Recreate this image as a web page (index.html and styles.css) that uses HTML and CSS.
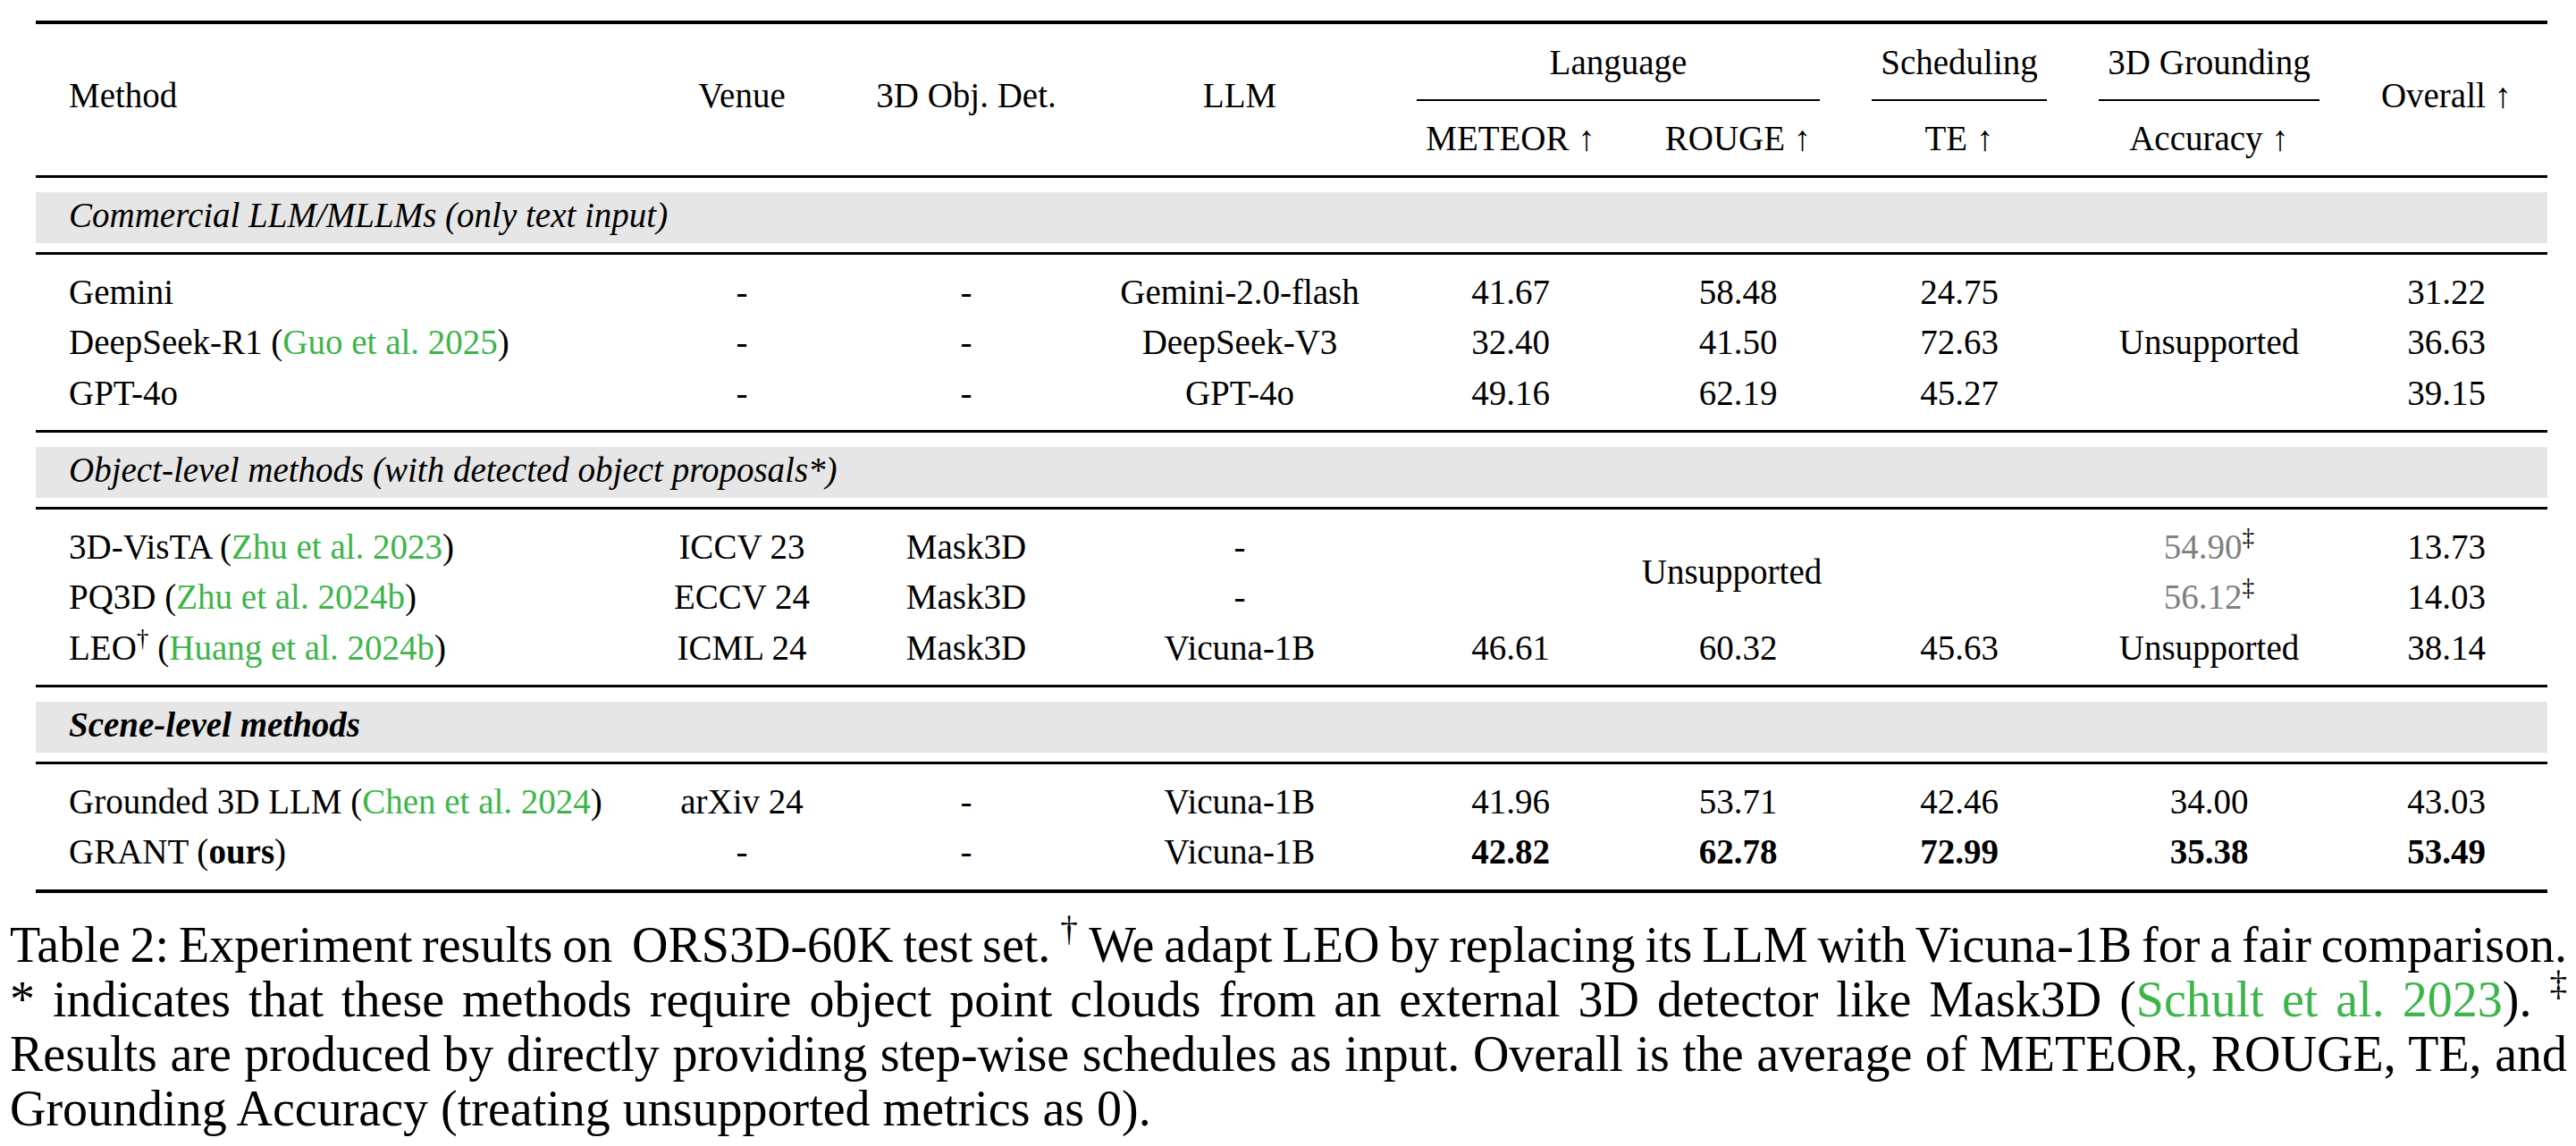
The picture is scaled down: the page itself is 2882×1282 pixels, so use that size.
FILE: index.html
```html
<!DOCTYPE html>
<html lang="en">
<head>
<meta charset="utf-8">
<title>Table 2: Experiment results on ORS3D-60K</title>
<link rel="stylesheet" href="styles.css">
</head>
<body>
<div class="paper">
  <div class="results">
    <div class="head grid">
      <div class="hcell method span-all">Method</div>
      <div class="hcell venue span-all">Venue</div>
      <div class="hcell det span-all">3D Obj. Det.</div>
      <div class="hcell llm span-all">LLM</div>
      <div class="hcell grp-lang">Language</div>
      <div class="hcell grp-sched">Scheduling</div>
      <div class="hcell grp-ground">3D Grounding</div>
      <div class="hcell overall span-all">Overall ↑</div>
      <div class="cmid grp-lang"></div>
      <div class="cmid grp-sched"></div>
      <div class="cmid grp-ground"></div>
      <div class="hcell sub sub-meteor">METEOR ↑</div>
      <div class="hcell sub sub-rouge">ROUGE ↑</div>
      <div class="hcell sub sub-te">TE ↑</div>
      <div class="hcell sub sub-acc">Accuracy ↑</div>
    </div>

    <div class="group"><div class="band"><i>Commercial LLM/MLLMs (only text input)</i></div></div>
    <div class="body grid">
      <div class="cell acc-span3">Unsupported</div>
      <div class="cell m">Gemini</div><div class="cell">-</div><div class="cell">-</div><div class="cell">Gemini-2.0-flash</div><div class="cell">41.67</div><div class="cell">58.48</div><div class="cell">24.75</div><div class="cell">31.22</div>
      <div class="cell m">DeepSeek-R1 (<span class="cite">Guo et al. 2025</span>)</div><div class="cell">-</div><div class="cell">-</div><div class="cell">DeepSeek-V3</div><div class="cell">32.40</div><div class="cell">41.50</div><div class="cell">72.63</div><div class="cell">36.63</div>
      <div class="cell m">GPT-4o</div><div class="cell">-</div><div class="cell">-</div><div class="cell">GPT-4o</div><div class="cell">49.16</div><div class="cell">62.19</div><div class="cell">45.27</div><div class="cell">39.15</div>
    </div>

    <div class="group"><div class="band"><i>Object-level methods (with detected object proposals*)</i></div></div>
    <div class="body grid">
      <div class="cell lang-span">Unsupported</div>
      <div class="cell m">3D-VisTA (<span class="cite">Zhu et al. 2023</span>)</div><div class="cell">ICCV 23</div><div class="cell">Mask3D</div><div class="cell">-</div><div class="cell"><span class="dim">54.90</span><sup class="mark">‡</sup></div><div class="cell">13.73</div>
      <div class="cell m">PQ3D (<span class="cite">Zhu et al. 2024b</span>)</div><div class="cell">ECCV 24</div><div class="cell">Mask3D</div><div class="cell">-</div><div class="cell"><span class="dim">56.12</span><sup class="mark">‡</sup></div><div class="cell">14.03</div>
      <div class="cell m">LEO<sup class="mark">†</sup> (<span class="cite">Huang et al. 2024b</span>)</div><div class="cell">ICML 24</div><div class="cell">Mask3D</div><div class="cell">Vicuna-1B</div><div class="cell">46.61</div><div class="cell">60.32</div><div class="cell">45.63</div><div class="cell">Unsupported</div><div class="cell">38.14</div>
    </div>

    <div class="group"><div class="band"><b><i>Scene-level methods</i></b></div></div>
    <div class="body grid last">
      <div class="cell m">Grounded 3D LLM (<span class="cite">Chen et al. 2024</span>)</div><div class="cell">arXiv 24</div><div class="cell">-</div><div class="cell">Vicuna-1B</div><div class="cell">41.96</div><div class="cell">53.71</div><div class="cell">42.46</div><div class="cell">34.00</div><div class="cell">43.03</div>
      <div class="cell m">GRANT (<b>ours</b>)</div><div class="cell">-</div><div class="cell">-</div><div class="cell">Vicuna-1B</div><div class="cell"><b>42.82</b></div><div class="cell"><b>62.78</b></div><div class="cell"><b>72.99</b></div><div class="cell"><b>35.38</b></div><div class="cell"><b>53.49</b></div>
    </div>
  </div>

  <p class="caption">
    <span class="ln ln1">Table 2: Experiment results on&nbsp; ORS3D-60K test set. <sup class="cmark">†</sup> We adapt LEO by replacing its LLM with Vicuna-1B for a fair comparison.</span>
    <span class="ln ln2">* indicates that these methods require object point clouds from an external 3D detector like Mask3D (<span class="cite">Schult et al. 2023</span>). <sup class="cmark">‡</sup></span>
    <span class="ln ln3">Results are produced by directly providing step-wise schedules as input. Overall is the average of METEOR, ROUGE, TE, and</span>
    <span class="ln end">Grounding Accuracy (treating unsupported metrics as 0).</span>
  </p>
</div>
</body>
</html>
```

FILE: styles.css
```css
html, body {
  margin: 0;
  padding: 0;
  background: #ffffff;
}

body {
  font-family: "Liberation Serif", "Times New Roman", serif;
  color: #000000;
}

.paper {
  width: 2882px;
}

/* ---------- table ---------- */
.results {
  margin: 23px 0 0 40px;
  width: 2810px;
  font-size: 39px;
}

.grid {
  display: grid;
  grid-template-columns: 676px 228px 274px 338px 268px 241px 254px 305px 226px;
}

.head {
  border-top: 4px solid #000;
  border-bottom: 3px solid #000;
  padding: 15px 0 13px;
  grid-template-rows: 56px 13px 2px 14px 56px;
  line-height: 56px;
}

.hcell {
  text-align: center;
  white-space: nowrap;
}

.span-all {
  grid-row: 1 / 6;
  align-self: start;
  padding-top: 37px;
  line-height: 56px;
}

.method { grid-column: 1; text-align: left; padding-left: 37px; }
.venue { grid-column: 2; }
.det { grid-column: 3; }
.llm { grid-column: 4; }
.overall { grid-column: 9; }

.hcell.grp-lang { grid-column: 5 / 7; grid-row: 1; }
.hcell.grp-sched { grid-column: 7; grid-row: 1; }
.hcell.grp-ground { grid-column: 8; grid-row: 1; }

.cmid {
  grid-row: 3;
  background: #000;
  margin: 0 29px;
}
.cmid.grp-lang { grid-column: 5 / 7; }
.cmid.grp-sched { grid-column: 7; }
.cmid.grp-ground { grid-column: 8; }

.sub { grid-row: 5; }
.sub-meteor { grid-column: 5; }
.sub-rouge { grid-column: 6; }
.sub-te { grid-column: 7; }
.sub-acc { grid-column: 8; }

/* group header bands */
.group {
  padding: 16px 0 10px;
  border-bottom: 3px solid #000;
}

.band {
  box-sizing: border-box;
  height: 57px;
  line-height: 52px;
  padding: 0 0 5px 37px;
  background: #e6e6e6;
  white-space: nowrap;
}

/* body sections */
.body {
  grid-auto-rows: 56.5px;
  line-height: 56.5px;
  padding: 13.5px 0 13px;
  border-bottom: 3px solid #000;
}

.body.last {
  border-bottom-width: 4px;
}

.cell {
  text-align: center;
  white-space: nowrap;
}

.cell.m {
  text-align: left;
  padding-left: 37px;
}

.acc-span3 {
  grid-column: 8;
  grid-row: 1 / 4;
  align-self: center;
}

.lang-span {
  grid-column: 5 / 8;
  grid-row: 1 / 3;
  align-self: center;
}

.cite {
  color: #3db54a;
}

.dim {
  color: #808080;
}

.mark {
  font-size: 0.7em;
  line-height: 0;
  vertical-align: 0.55em;
}

/* ---------- caption ---------- */
.caption {
  margin: 28px 0 0 11px;
  width: 2861px;
  font-size: 56px;
  line-height: 61px;
}

.ln {
  display: block;
  text-align: justify;
  text-align-last: justify;
  white-space: nowrap;
}

.ln1 { word-spacing: -0.1em; }
.ln3 { word-spacing: -0.03em; }

.ln.end {
  text-align: left;
  text-align-last: left;
}

.cmark {
  font-size: 0.7em;
  line-height: 0;
  vertical-align: 0.6em;
}
```
